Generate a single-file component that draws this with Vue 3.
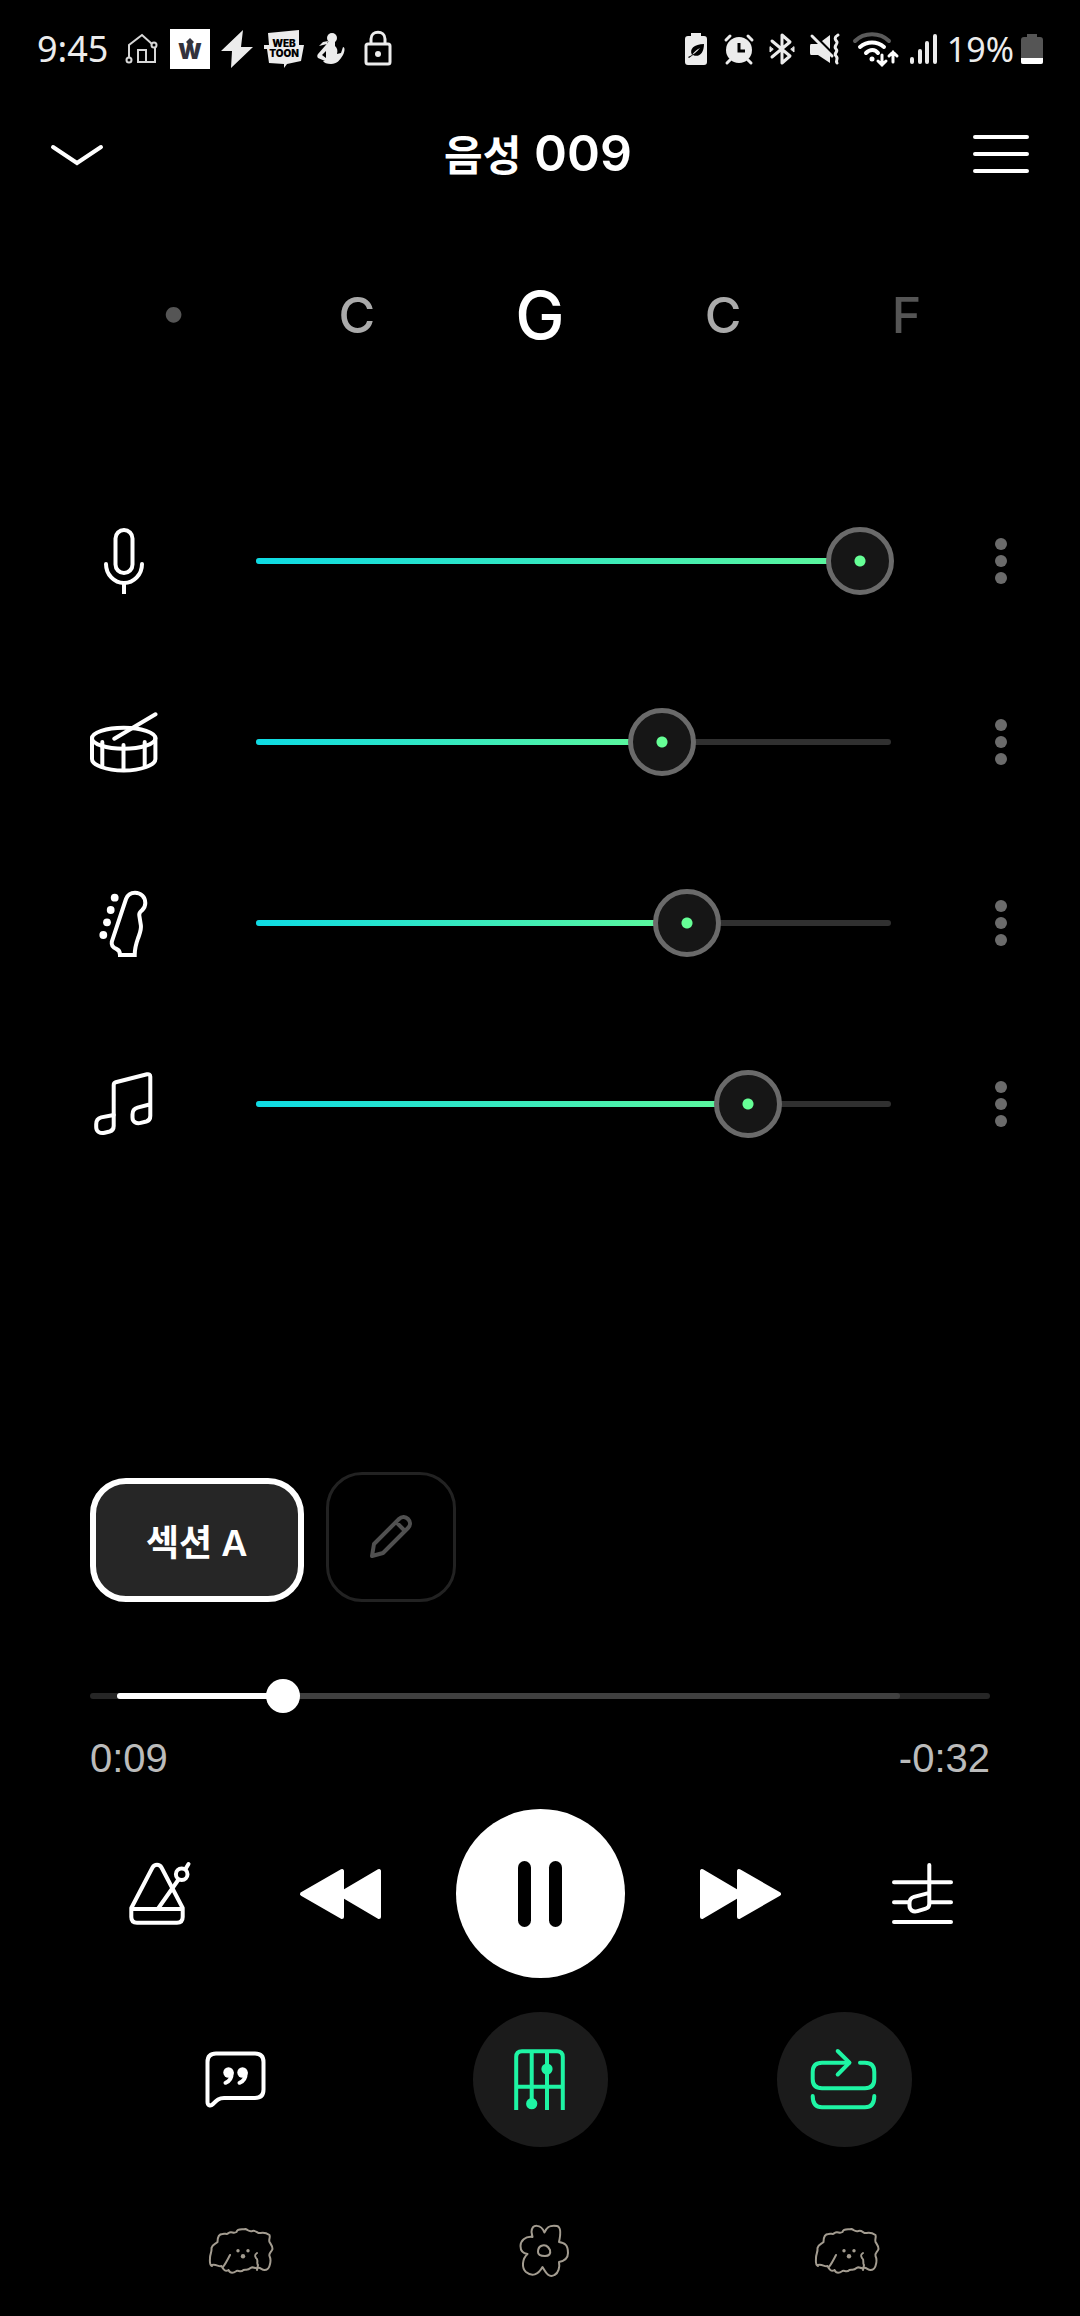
<template>
  <div class="player">
    <div class="status-bar">
      <div class="status-left">
        <span class="status-text">9:45</span>
        <svg width="40" height="40" viewBox="0 0 40 40" fill="none" stroke="#d8d8d8" stroke-width="2">
          <path d="M6 28V16L19 6l10 9M32 19v14H15V21h8v12" />
          <circle cx="6" cy="31" r="2.5" />
          <circle cx="31" cy="16" r="2.5" />
        </svg>
        <svg width="40" height="40" viewBox="0 0 40 40">
          <rect width="40" height="40" fill="#fff" />
          <text x="20" y="30" text-anchor="middle" class="crown-letter">W</text>
          <path d="M20 9l4 4-4 4-4-4z" fill="#33333d" />
        </svg>
        <svg width="40" height="40" viewBox="0 0 40 40" fill="#ececec">
          <path d="M26 1L4 22h11L14 39l22-21H24z" />
        </svg>
        <svg width="40" height="40" viewBox="0 0 40 40">
          <path d="M4 4L35 1v15h5l-3 16-14 3-3 4v-4L5 34 3 20H0v-4h5z" fill="#ececec" />
          <text x="20" y="18" text-anchor="middle" class="badge-text">WEB</text>
          <text x="20" y="28" text-anchor="middle" class="badge-text">TOON</text>
        </svg>
        <svg width="40" height="40" viewBox="0 0 40 40" fill="#ececec">
          <circle cx="21" cy="9" r="5" />
          <path d="M18 12h6v5c2 2 3 4 2 8l4-1 2-6c2 0 2 4 0 8-3 5-6 9-12 9-4 0-7-1-8-3h2l-7-3c-1-1-1-3 0-4l7-8zM15 22l-4 4 4 3z" fill-rule="evenodd" />
          <path d="M17 12l-5 1-4 4 8-2z" />
        </svg>
        <svg width="40" height="40" viewBox="0 0 40 40" fill="none" stroke="#ececec" stroke-width="3">
          <rect x="8" y="15" width="24" height="20" rx="2" />
          <path d="M13 15v-5c0-9 14-9 14 0v5" />
          <circle cx="20" cy="25" r="3" fill="#ececec" stroke="none" />
        </svg>
      </div>
      <div class="status-right">
        <svg width="36" height="36" viewBox="0 0 36 36">
          <path d="M13 5V2h10v3h3q3 0 3 3v23q0 3-3 3H10q-3 0-3-3V8q0-3 3-3z" fill="#ececec" />
          <path d="M10 26c5-2 9-5 12-9-4 2-6 4-8 7-3-6 2-11 12-11 0 9-5 14-11 11l-4 3z" fill="#000" />
        </svg>
        <svg width="36" height="36" viewBox="0 0 36 36" fill="none" stroke="#ececec" stroke-width="3" stroke-linecap="round">
          <circle cx="18" cy="19" r="13" fill="#ececec" stroke="none" />
          <path d="M5 9l4-4M31 9l-4-4M9 29l-3 3M27 29l3 3" />
          <path d="M18 12v8h6" stroke="#000" stroke-linecap="butt" />
        </svg>
        <svg width="36" height="36" viewBox="0 0 36 36" fill="none" stroke="#ececec" stroke-width="3" stroke-linejoin="round" stroke-linecap="round">
          <path d="M8 10l18 15-8 7V4l8 7L8 26" />
          <path d="M6 16v5l3-2.5zM30 16v5l-3-2.5z" stroke-width="1" fill="#ececec" />
        </svg>
        <svg width="36" height="36" viewBox="0 0 36 36">
          <path d="M4 13h7L23 4v28L11 24H4q-1 0-1-2v-7q0-2 1-2z" fill="#ececec" />
          <path d="M4 2l21 21" stroke="#000" stroke-width="4" />
          <path d="M5 5l20 20M31 4c-5 3-2 5-1 7s-4 4-1 7-3 4 0 7-1 4 1 7" fill="none" stroke="#ececec" stroke-width="3" stroke-linecap="round" />
        </svg>
        <svg width="52" height="40" viewBox="0 0 52 40" fill="none" stroke="#fff" stroke-width="4" stroke-linecap="round">
          <path d="M5 12c9-9 25-9 34 0" stroke="#5a5a5a" />
          <path d="M10 18c7-6 17-6 24 0M16 24c4-4 9-4 12 0" />
          <circle cx="22" cy="30" r="2.5" fill="#fff" stroke="none" />
          <path d="M32 26v10m-4-4l4 4 4-4M43 33V23m-4 4l4-4 4 4" stroke-width="3" />
        </svg>
        <svg width="28" height="36" viewBox="0 0 28 36" stroke="#ececec" stroke-width="4" stroke-linecap="round">
          <path d="M3 28v3M11 20v11M18 12v19M26 5v26" />
        </svg>
        <span class="status-text battery-text">19%</span>
        <svg width="22" height="36" viewBox="0 0 22 36">
          <path d="M6 6V3h10v3h3q3 0 3 3v22q0 2-2 2H2q-2 0-2-2V9q0-3 3-3z" fill="#555" />
          <path d="M0 27h22v4q0 2-2 2H2q-2 0-2-2z" fill="#fff" />
        </svg>
      </div>
    </div>

    <header class="header">
      <button class="icon-button" aria-label="닫기">
        <svg width="54" height="24" viewBox="0 0 54 24" fill="none" stroke="#fff" stroke-width="4" stroke-linecap="round">
          <path d="M3 5l24 16L51 5" />
        </svg>
      </button>
      <h1 class="title"><span class="title-korean">음성</span> 009</h1>
      <button class="icon-button" aria-label="메뉴">
        <svg width="58" height="40" viewBox="0 0 58 40" stroke="#fff" stroke-width="4" stroke-linecap="round">
          <path d="M3 3h52M3 20h52M3 37h52" />
        </svg>
      </button>
    </header>

    <div class="chords">
      <span v-for="(chord, index) in chords" :key="index" :class="['chord', chord.tone]">{{ chord.name }}</span>
    </div>

    <div class="mixer">
      <div v-for="track in tracks" :key="track.id" class="track-row">
        <label :for="track.id" :aria-label="track.label">
          <svg class="track-icon" viewBox="0 0 68 68">
            <template v-if="track.id === 'vocal'">
              <rect x="25.5" y="3" width="17" height="43" rx="8.5" />
              <path d="M16 37a18 19 0 0 0 36 0" />
              <path d="M34 56v11" stroke-linecap="butt" />
            </template>
            <template v-else-if="track.id === 'drum'">
              <ellipse cx="33.7" cy="30.3" rx="31.7" ry="10.5" />
              <path d="M2 30v21c0 6 14 11.5 31.700 11.500S65.400 57 65.400 51V30" />
              <path d="M12.300 34v24M33.500 37v25M54.700 34v24M24.300 30.700L65.500 6.300" />
            </template>
            <template v-else-if="track.id === 'bass'">
              <path d="M36 10C37.500 6 41 3.700 45 3.700c6 0 10.300 4.500 10.300 10.300 0 3-1 5-3 7-2 2-3.500 2.500-3 5.500l1.600 10c.5 4-.9 7-2.400 11.500C46 55 44.700 58 44.700 66H30c0-3.500-.8-5-3.500-6-3.500-1.300-5.500-3-4.700-7.300z" stroke-linejoin="miter" />
              <g class="filled">
                <circle cx="24.7" cy="8.7" r="3.9" />
                <circle cx="20.7" cy="21" r="3.9" />
                <circle cx="17" cy="33.3" r="3.9" />
                <circle cx="13.3" cy="46" r="3.9" />
              </g>
            </template>
            <template v-else>
              <path d="M23.700 45V15c0-1.500.8-2.500 2-2.800L57 4.300c2-.5 3.300.5 3.300 2.500V46c0 3-1.500 4.800-4 5.500l-5.500 1.400c-4.500 1.200-8.300-1-8.300-5.500v-3c0-4 2-6 5-6.800l12.800-3.300" />
              <path d="M23.700 45v11c0 3-1.500 4.800-4 5.500l-5 1.200c-4.500 1.200-8.500-1-8.500-5.500v-3c0-4 2-6 5-6.800z" />
            </template>
          </svg>
        </label>
        <div class="volume">
          <div class="volume-fill" :style="{ width: track.volume + '%' }"></div>
          <input :id="track.id" v-model.number="track.volume" class="volume-input" type="range" min="0" max="100" step="any" />
        </div>
        <button class="icon-button more" :aria-label="track.label + ' 더보기'">
          <svg width="12" height="46" viewBox="0 0 12 46" fill="#6b6b6b">
            <circle cx="6" cy="6" r="6" />
            <circle cx="6" cy="23" r="6" />
            <circle cx="6" cy="40" r="6" />
          </svg>
        </button>
      </div>
    </div>

    <div class="sections">
      <button class="section-button">섹션 A</button>
      <button class="edit-button" aria-label="섹션 편집">
        <svg width="46" height="46" viewBox="0 0 46 46" fill="none" stroke="#505050" stroke-width="4" stroke-linejoin="round">
          <path d="M4 42l2-12L31 5c6-6 15 3 9 9L15 39zM28 8l9 9" />
        </svg>
      </button>
    </div>

    <div class="progress">
      <div class="progress-bar">
        <div class="progress-range"></div>
        <div class="progress-played" :style="{ width: position - 3 + '%' }"></div>
        <input v-model.number="position" class="progress-input" type="range" min="0" max="100" step="any" aria-label="재생 위치" />
      </div>
      <div class="times">
        <span>0:09</span>
        <span>-0:32</span>
      </div>
    </div>

    <div class="controls">
      <button class="icon-button" aria-label="메트로놈">
        <svg class="tool-icon" viewBox="0 0 68 68">
          <path d="M7.300 48L28.500 7.500c2-3.600 7-3.600 9 0L58.700 48v9c0 3.700-2 5.700-5.700 5.700H13c-3.700 0-5.700-2-5.700-5.700zM7.300 49h51.400" />
          <path d="M34.500 48l19.700-28M61.500 9l3-5" />
          <circle cx="57.7" cy="14.3" r="5.8" />
        </svg>
      </button>
      <div class="transport">
        <button class="icon-button" aria-label="뒤로">
          <svg class="seek-icon" viewBox="0 0 82 52">
            <path d="M3 26L43 3v46zM41 26L80 3v46z" />
          </svg>
        </button>
        <button class="play-button" :aria-label="playing ? '일시정지' : '재생'" @click="playing = !playing">
          <svg v-if="playing" width="44" height="66" viewBox="0 0 44 66">
            <rect width="13" height="66" rx="6.5" />
            <rect x="31" width="13" height="66" rx="6.5" />
          </svg>
          <svg v-else width="44" height="66" viewBox="0 0 44 66">
            <path d="M4 6l38 27L4 60z" />
          </svg>
        </button>
        <button class="icon-button" aria-label="앞으로">
          <svg class="seek-icon" viewBox="0 0 82 52">
            <path d="M79 26L39 3v46zM41 26L2 3v46z" />
          </svg>
        </button>
      </div>
      <button class="icon-button" aria-label="음정">
        <svg class="tool-icon" viewBox="0 0 68 68">
          <path d="M6 22.300h57M6 42.300h15M42 42.300h21M6 62h57" />
          <path d="M41.300 5v39c0 2.500-1.300 4-3.500 4.600l-8.300 2.500c-4.500 1.300-8-1-8-5.500v-2.500c0-3.500 1.500-5.300 4.500-6.200l15.300-4" />
        </svg>
      </button>
    </div>

    <div class="tools">
      <button class="tool-button" aria-label="가사">
        <svg class="tool-icon" viewBox="0 0 68 68">
          <path d="M5.500 56V16c0-5.500 3-8.500 8.500-8.500h39c5.500 0 8.500 3 8.500 8.500v27.500c0 5.500-3 8.500-8.500 8.500H22c-5 0-7 2-11 6-2.500 2.500-5.500 1.500-5.500-2z" />
          <path d="M29.700 27c0 5-2.500 8.500-6.200 9.800M43.700 27c0 5-2.500 8.500-6.200 9.800" />
          <circle class="filled" cx="26.5" cy="26.5" r="5.2" />
          <circle class="filled" cx="40.5" cy="26.5" r="5.2" />
        </svg>
      </button>
      <button class="tool-button active" aria-label="코드">
        <svg class="tool-icon" viewBox="0 0 68 68">
          <path d="M10.200 64V11c0-4 2-5.800 5.800-5.800h35c3.800 0 5.800 1.800 5.800 5.800v53M25.700 5v52M41 5v59M10 40.700h47" stroke-linecap="butt" />
          <circle class="filled" cx="25.7" cy="57.7" r="5.6" />
          <circle class="filled" cx="41" cy="23" r="5.6" />
        </svg>
      </button>
      <button class="tool-button active" aria-label="반복">
        <svg class="tool-icon" viewBox="0 0 68 68">
          <path d="M39 16.700H12c-6 0-9.300 3.300-9.300 9.300v7c0 6 3.300 9.300 9.300 9.300h43c6 0 9.300-3.300 9.300-9.300v-7c0-6-3.300-9.300-9.300-9.300h-5" />
          <path d="M27.700 5L39.500 16.700 27.700 28.500M2.700 50c0 8 3.300 11.300 9.300 11.300h43c6 0 9.300-3.300 9.300-11.300" />
        </svg>
      </button>
    </div>

    <nav class="nav">
      <button v-for="item in navItems" :key="item.label" class="icon-button" :aria-label="item.label">
        <svg v-if="item.icon === 'dog'" class="nav-icon" viewBox="0 0 68 52">
          <path d="M5 41c-3-1-2-5-2-8 0-4 2-6 1.500-10 1-4 4-4 6-6 0-5 2-8 5-8 3-1 4 1 6-1 3-2 5 1 8-1 1-4 6-2 9-3 3 1 3 3 7 2 4-1 5 3 8 2 4-1 6 0 9 2 1 3-1 4 0 7 2 3 3 4 3 7-1 3-4 4-3 7 2 4 1 7 0 10-1 3-3 4-5 4-3 0-4-3-7-2-3 1-4-2-7 0-3 3-5 1-7 2-3 3-5 0-7 1-3 2-6 3-8-1-3 2-5 0-7-4-3 1-5-2-9.500-1z" />
          <path d="M23 30c-2 4-4 8-7 12M50 28c-3 2-2 3-1 5 3 2 0 5 2 7l-1 5" />
          <circle class="dot" cx="31" cy="25.7" r="1.7" />
          <circle class="dot" cx="41" cy="25.7" r="1.7" />
          <circle class="dot" cx="36" cy="31.3" r="2.2" />
        </svg>
        <svg v-else class="flower-icon" viewBox="0 0 52 56">
          <path d="M26.500 9.500C23 1 14 .5 13.500 9l1 5C7 13 2.500 18 2.500 23c0 5 3 7.500 7 8C4 36 3.500 45 8 49c6 5 12 3 16.500-5 4 7 7 11 12 8 4-2 5.500-8 4.500-13 5-1 9-4 9-9 0-8-3-10-9-11C43 10 43 4 39 3c-6-1-10 0-12.500 6.500z" />
          <path d="M23 23c4-2 7 0 9 4 1 4-1 6-5 6-5 0-7-1-7-4s1-5 3-6z" />
        </svg>
      </button>
    </nav>
  </div>
</template>

<script setup>
import { ref } from 'vue'

const chords = [
  { name: '•', tone: 'far' },
  { name: 'C', tone: 'near' },
  { name: 'G', tone: 'current' },
  { name: 'C', tone: 'near' },
  { name: 'F', tone: 'far' }
]

const tracks = ref([
  { id: 'vocal', label: '보컬', volume: 100 },
  { id: 'drum', label: '드럼', volume: 65.5 },
  { id: 'bass', label: '베이스', volume: 69.8 },
  { id: 'other', label: '기타', volume: 80.5 }
])

const navItems = [
  { label: '최근 앱', icon: 'dog' },
  { label: '홈', icon: 'flower' },
  { label: '뒤로 가기', icon: 'dog' }
]

const position = ref(20.3)
const playing = ref(true)
</script>

<style>
body {
  background-color: #000;
}
</style>

<style scoped>
.player {
  display: flex;
  flex-direction: column;
  min-height: 100vh;
  box-sizing: border-box;
  background-color: #000;
  color: #fff;
  font-family: Inter, "Noto Sans CJK KR", sans-serif;
}

button {
  font-family: inherit;
  color: inherit;
  cursor: pointer;
}

svg {
  display: block;
}

.icon-button {
  padding: 0;
  border: none;
  background: none;
}

/* status bar */
.status-bar {
  display: flex;
  justify-content: space-between;
  align-items: center;
  height: 98px;
  padding: 0 37px;
}

.status-left,
.status-right {
  display: flex;
  align-items: center;
  gap: 7px;
}

.status-text {
  font-family: "Noto Sans", sans-serif;
  font-size: 36px;
  line-height: 40px;
  color: #ececec;
}

.status-left .status-text {
  margin-right: 8px;
}

.battery-text {
  font-size: 34px;
  margin-left: 3px;
}

.crown-letter {
  font: 900 22px Inter, sans-serif;
  fill: #33333d;
}

.badge-text {
  font: 900 10px Inter, sans-serif;
  fill: #000;
}

/* header */
.header {
  display: flex;
  justify-content: space-between;
  align-items: center;
  height: 112px;
  padding: 0 50px;
}

.title {
  margin: 0;
  font-size: 50px;
  line-height: 60px;
  font-weight: 600;
}

.title-korean {
  font-size: 42px;
}

/* chords */
.chords {
  display: grid;
  grid-template-columns: repeat(5, 1fr);
  align-items: center;
  height: 100px;
  margin-top: 55px;
  padding: 0 82px;
  text-align: center;
}

.chord {
  font-size: 50px;
  line-height: 80px;
  font-weight: 500;
  font-feature-settings: "case";
}

.near {
  color: #aaa;
}

.far {
  color: #555;
}

.current {
  font-size: 66px;
}

/* mixer */
.mixer {
  display: flex;
  flex-direction: column;
  gap: 113px;
  margin-top: 162px;
  padding: 0 45px 0 90px;
}

.track-row {
  display: flex;
  align-items: center;
}

.track-icon,
.tool-icon {
  width: 68px;
  height: 68px;
  fill: none;
  stroke: currentColor;
  stroke-width: 4;
  stroke-linecap: round;
  stroke-linejoin: round;
}

.filled {
  fill: currentColor;
  stroke: none;
}

.volume {
  position: relative;
  flex: 1;
  height: 6px;
  margin: 0 76px 0 98px;
  border-radius: 3px;
  background-color: #303030;
}

.volume-fill {
  height: 6px;
  border-radius: 3px;
  background: linear-gradient(to right, #0edbe4, #62f996);
}

/* the input lies over the drawn track, only its thumb is visible */
.volume-input {
  position: absolute;
  top: -31px;
  left: -3px;
  width: calc(100% + 6px);
  height: 68px;
  margin: 0;
  appearance: none;
  background: none;
}

.volume-input::-webkit-slider-thumb {
  appearance: none;
  box-sizing: border-box;
  width: 68px;
  height: 68px;
  border: 5px solid #6a6a6a;
  border-radius: 50%;
  background: radial-gradient(circle, #66ff96 5px, #161616 6px);
}

.more {
  display: flex;
  justify-content: center;
  width: 68px;
}

/* sections */
.sections {
  display: flex;
  align-items: flex-end;
  gap: 22px;
  margin-top: 334px;
  padding: 0 90px;
}

.section-button {
  height: 124px;
  padding: 0 50px;
  border: 6px solid #fff;
  border-radius: 36px;
  background-color: #262626;
  font-size: 36px;
  font-weight: 600;
}

.edit-button {
  display: flex;
  justify-content: center;
  align-items: center;
  width: 130px;
  height: 130px;
  border: 3px solid #222;
  border-radius: 36px;
  background: none;
}

/* progress */
.progress {
  margin-top: 91px;
  padding: 0 90px;
}

.progress-bar {
  position: relative;
  height: 6px;
  border-radius: 3px;
  background-color: #262626;
}

.progress-range,
.progress-played {
  position: absolute;
  left: 3%;
  height: 6px;
  border-radius: 3px;
}

.progress-range {
  right: 10%;
  background-color: #404040;
}

.progress-played {
  background-color: #fff;
}

.progress-input {
  position: absolute;
  top: -14px;
  left: 0;
  width: 100%;
  height: 34px;
  margin: 0;
  appearance: none;
  background: none;
}

.progress-input::-webkit-slider-thumb {
  appearance: none;
  width: 34px;
  height: 34px;
  border-radius: 50%;
  background-color: #fff;
}

.times {
  display: flex;
  justify-content: space-between;
  margin-top: 35px;
  font-family: "Liberation Sans", sans-serif;
  font-size: 40px;
  line-height: 48px;
  color: #bbb;
}

/* controls */
.controls {
  display: flex;
  justify-content: space-between;
  align-items: center;
  margin-top: 27px;
  padding: 0 124px;
}

.transport {
  display: flex;
  align-items: center;
  gap: 75px;
}

.seek-icon {
  width: 82px;
  height: 52px;
  fill: #fff;
  stroke: #fff;
  stroke-width: 4;
  stroke-linejoin: round;
}

.play-button {
  display: flex;
  justify-content: center;
  align-items: center;
  width: 169px;
  height: 169px;
  border: none;
  border-radius: 50%;
  background-color: #fff;
}

/* tools */
.tools {
  display: grid;
  grid-template-columns: repeat(3, 1fr);
  justify-items: center;
  margin-top: 34px;
  padding: 0 84px;
}

.tool-button {
  display: flex;
  justify-content: center;
  align-items: center;
  width: 135px;
  height: 135px;
  border: none;
  border-radius: 50%;
  background: none;
}

.active {
  background-color: #1b1b1b;
  color: #1ef5a4;
}

/* navigation */
.nav {
  display: grid;
  grid-template-columns: repeat(3, 1fr);
  justify-items: center;
  align-items: center;
  margin-top: 76px;
  padding: 0 82px 0 90px;
}

.nav-icon,
.flower-icon {
  width: 68px;
  height: 52px;
  fill: none;
  stroke: #a39c90;
  stroke-width: 2;
  stroke-linejoin: round;
  stroke-linecap: round;
}

.flower-icon {
  width: 52px;
  height: 56px;
}

.dot {
  fill: #a39c90;
  stroke: none;
}
</style>
